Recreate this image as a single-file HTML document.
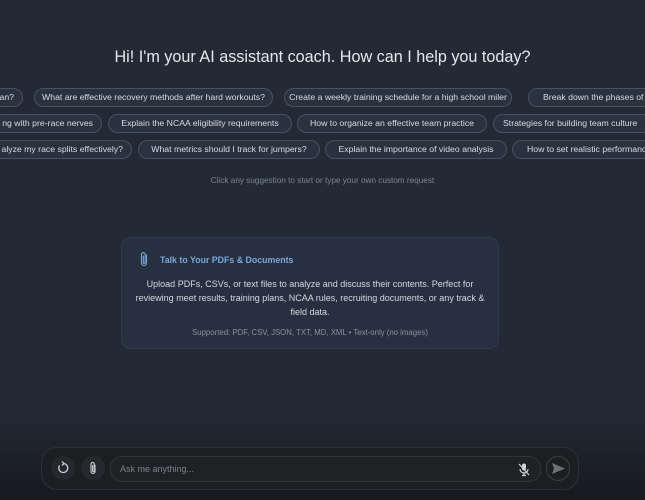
<!DOCTYPE html>
<html><head><style>
*{margin:0;padding:0;box-sizing:border-box}
body{width:645px;height:500px;overflow:hidden;background:linear-gradient(to bottom,#232a36 0,#232a36 410px,#1c2129 460px,#17191d 500px);font-family:"Liberation Sans",sans-serif;position:relative;color:#d1d5db}
.t{position:absolute;top:48px;left:0;width:645px;text-align:center;font-size:16.2px;color:#e5e7eb}
.c{position:absolute;height:19px;border:1px solid #485263;border-radius:10px;background:#2a3240;color:#d8dce2;font-size:8.7px;line-height:17px;text-align:center;white-space:nowrap;overflow:hidden}
.h{position:absolute;top:176px;width:645px;text-align:center;font-size:8.2px;color:#7b8390}
.card{position:absolute;left:121px;top:237px;width:378px;height:112px;border:1px solid #303a49;border-radius:10px;background:#263040}
.card .hd{position:absolute;left:38px;top:17px;font-size:8.8px;font-weight:bold;color:#7aa6dc}
.card .p{position:absolute;left:8px;right:8px;top:39px;text-align:center;font-size:9px;line-height:14px;color:#d5d9df}
.card .s{position:absolute;left:0;right:0;top:90px;text-align:center;font-size:7.8px;color:#8a919c}
.bar{position:absolute;left:41px;top:447px;width:538px;height:43px;border:1px solid #2c3038;border-radius:16px;background:#1c1e22}
.btn{position:absolute;top:8px;width:24px;height:24px;border-radius:12px;background:#25282d}
.in{position:absolute;left:68px;top:8px;width:431px;height:26px;border:1px solid #30343b;border-radius:12px;background:#1f2125;font-size:9px;color:#7e828a;line-height:24px;padding-left:9px}
.send{position:absolute;left:504px;top:8px;width:24px;height:25px;border:1px solid #3a3e45;border-radius:12px}
</style></head><body>
<div class="t">Hi! I'm your AI assistant coach. How can I help you today?</div>
<div class="c" style="left:-20px;top:88px;width:43px;text-align:right;padding-right:8px">an?</div>
<div class="c" style="left:34px;top:88px;width:239px">What are effective recovery methods after hard workouts?</div>
<div class="c" style="left:284px;top:88px;width:228px">Create a weekly training schedule for a high school miler</div>
<div class="c" style="left:528px;top:88px;width:140px;text-align:left;padding-left:14px">Break down the phases of th</div>
<div class="c" style="left:-40px;top:114px;width:142px;text-align:right;padding-right:8px">ng with pre-race nerves</div>
<div class="c" style="left:108px;top:114px;width:184px">Explain the NCAA eligibility requirements</div>
<div class="c" style="left:297px;top:114px;width:190px">How to organize an effective team practice</div>
<div class="c" style="left:493px;top:114px;width:160px;text-align:left;padding-left:9px">Strategies for building team culture</div>
<div class="c" style="left:-40px;top:140px;width:172px;text-align:right;padding-right:8px">alyze my race splits effectively?</div>
<div class="c" style="left:138px;top:140px;width:182px">What metrics should I track for jumpers?</div>
<div class="c" style="left:325px;top:140px;width:182px">Explain the importance of video analysis</div>
<div class="c" style="left:512px;top:140px;width:150px;text-align:left;padding-left:14px">How to set realistic performance g</div>
<div class="h">Click any suggestion to start or type your own custom request</div>
<div class="card">
<svg style="position:absolute;left:16px;top:13px" width="12" height="17" viewBox="0 0 12 17"><path d="M8.5 4v8a2.5 2.5 0 0 1-5 0V3.5a1.8 1.8 0 0 1 3.6 0V11.5a.9.9 0 0 1-1.8 0V5" fill="none" stroke="#7aa6dc" stroke-width="1.1" stroke-linecap="round"/></svg>
<div class="hd">Talk to Your PDFs &amp; Documents</div>
<div class="p">Upload PDFs, CSVs, or text files to analyze and discuss their contents. Perfect for reviewing meet results, training plans, NCAA rules, recruiting documents, or any track &amp; field data.</div>
<div class="s">Supported: PDF, CSV, JSON, TXT, MD, XML • Text-only (no images)</div>
</div>
<div class="bar">
<div class="btn" style="left:9px"><svg width="24" height="24" viewBox="0 0 24 24"><path d="M8.5 9.5A4.5 4.5 0 1 0 12 7.5" fill="none" stroke="#c8ccd2" stroke-width="1.3"/><path d="M11 5.5l2 2-2 2" fill="none" stroke="#c8ccd2" stroke-width="1.3"/></svg></div>
<div class="btn" style="left:39px"><svg width="24" height="24" viewBox="0 0 24 24"><path d="M14 9v6.5a2 2 0 0 1-4 0V8a1.6 1.6 0 0 1 3.2 0v7a.8.8 0 0 1-1.6 0V9.5" fill="none" stroke="#c8ccd2" stroke-width="1.1" stroke-linecap="round"/></svg></div>
<div class="in">Ask me anything...<svg style="position:absolute;right:9px;top:5px" width="14" height="15" viewBox="0 0 14 15"><rect x="5" y="1.5" width="4" height="7" rx="2" fill="#d0d3d8"/><path d="M3 7a4 4 0 0 0 8 0M7 11v2.5M5 13.5h4M2 2l10 11" fill="none" stroke="#d0d3d8" stroke-width="1.2"/></svg></div>
<div class="send"><svg width="22" height="23" viewBox="0 0 22 23"><path d="M5 6l13 5.5L5 17l2-5.5z" fill="#6b6f76"/></svg></div>
</div>
</body></html>
